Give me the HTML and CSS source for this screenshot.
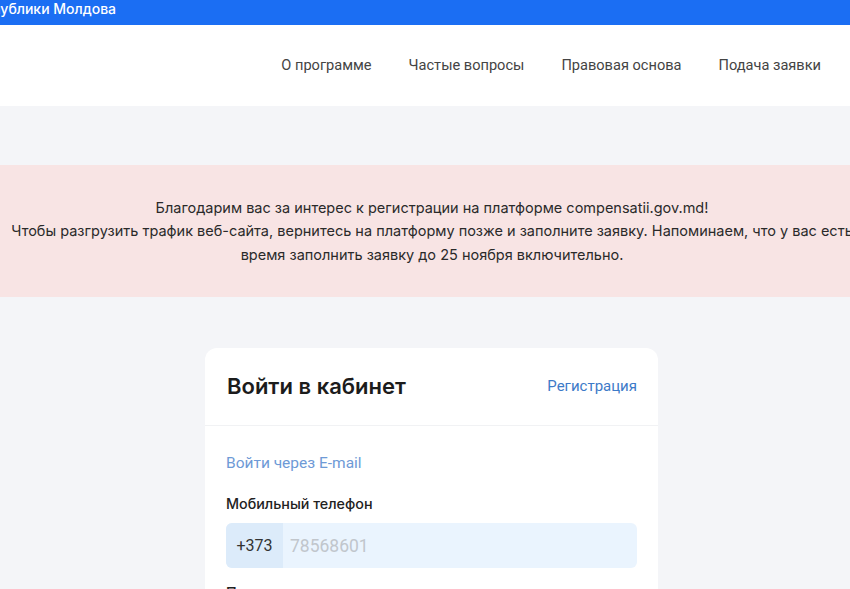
FILE: index.html
```html
<!DOCTYPE html>
<html lang="ru">
<head>
	<meta charset="UTF-8">
	<title>Войти в кабинет</title>
	<link rel="stylesheet" href="styles.css">
</head>
<body>
	<div class="topbar">
		<span class="gov">Республики Молдова</span>
	</div>
	<header class="nav">
		<a href="#">О программе</a>
		<a href="#">Частые вопросы</a>
		<a href="#">Правовая основа</a>
		<a href="#">Подача заявки</a>
	</header>
	<main class="page">
		<div class="notice">
			<p>Благодарим вас за интерес к регистрации на платформе compensatii.gov.md!<br>
			Чтобы разгрузить трафик веб-сайта, вернитесь на платформу позже и заполните заявку. Напоминаем, что у вас есть<br>
			время заполнить заявку до 25 ноября включительно.</p>
		</div>
		<form class="card">
			<div class="card-head">
				<h1>Войти в кабинет</h1>
				<a href="#" class="reg">Регистрация</a>
			</div>
			<div class="card-body">
				<a href="#" class="alt">Войти через E-mail</a>
				<label class="lbl" for="phone">Мобильный телефон</label>
				<div class="phone">
					<span class="prefix">+373</span>
					<input id="phone" type="text" placeholder="78568601">
				</div>
				<label class="lbl pass" for="pass">Пароль</label>
			</div>
		</form>
	</main>
</body>
</html>
```

FILE: styles.css
```css
html, body {
	margin: 0;
	padding: 0;
}
body {
	font-family: Inter, "Noto Sans", sans-serif;
	background: #f4f5f8;
	overflow: hidden;
	color: #222;
}
a {
	text-decoration: none;
}

.topbar {
	height: 25px;
	background: #1b6ef3;
	color: #fff;
	display: flex;
	align-items: center;
	overflow: hidden;
}
.gov {
	font-size: 14px;
	font-weight: 500;
	white-space: nowrap;
	margin-left: -33px;
	margin-top: -9px;
}

.nav {
	height: 81px;
	background: #fff;
	display: flex;
	justify-content: flex-end;
	align-items: center;
	gap: 37px;
	padding-right: 29px;
	box-sizing: border-box;
}
.nav a {
	font-family: Roboto, sans-serif;
	font-size: 14.6px;
	font-weight: 400;
	color: #444;
	margin-top: -2px;
}

.page {
	padding-top: 59px;
}
.notice {
	background: #f8e4e4;
	height: 132px;
	margin: 0 -120px;
	display: flex;
	align-items: center;
	justify-content: center;
}
.notice p {
	margin: 0;
	text-align: center;
	white-space: nowrap;
	font-size: 14.5px;
	line-height: 23.5px;
	color: #2a2a2a;
	padding-left: 14px;
}

.card {
	width: 453px;
	margin: 51px 0 0 205px;
	background: #fff;
	border-radius: 12px;
}
.card-head {
	display: flex;
	justify-content: space-between;
	align-items: center;
	padding: 25px 21px 26px 22px;
	border-bottom: 1px solid #f1f2f4;
}
.card-head h1 {
	margin: 0;
	font-size: 22px;
	font-weight: 600;
	color: #1c1c1c;
}
.reg {
	font-family: Roboto, sans-serif;
	font-size: 15px;
	color: #3d7ac8;
}
.card-body {
	padding: 28px 21px 0 21px;
	display: flex;
	flex-direction: column;
}
.alt {
	font-family: Roboto, sans-serif;
	font-size: 15.5px;
	color: #6e9ad6;
}
.lbl {
	font-size: 14.3px;
	font-weight: 500;
	color: #222;
	margin-top: 23px;
}
.phone {
	display: flex;
	height: 45px;
	margin-top: 11px;
	background: #eaf4fe;
	border-radius: 6px;
	overflow: hidden;
}
.prefix {
	width: 57px;
	background: #dcebfa;
	display: flex;
	align-items: center;
	justify-content: center;
	font-family: Roboto, sans-serif;
	font-size: 16px;
	color: #333;
}
.phone input {
	flex: 1;
	border: 0;
	background: transparent;
	padding: 0 0 0 7px;
	font-family: Roboto, sans-serif;
	font-size: 17.5px;
	outline: none;
}
.phone input::placeholder {
	color: #c1c6cc;
}
.pass {
	margin-top: 16px;
}
```
